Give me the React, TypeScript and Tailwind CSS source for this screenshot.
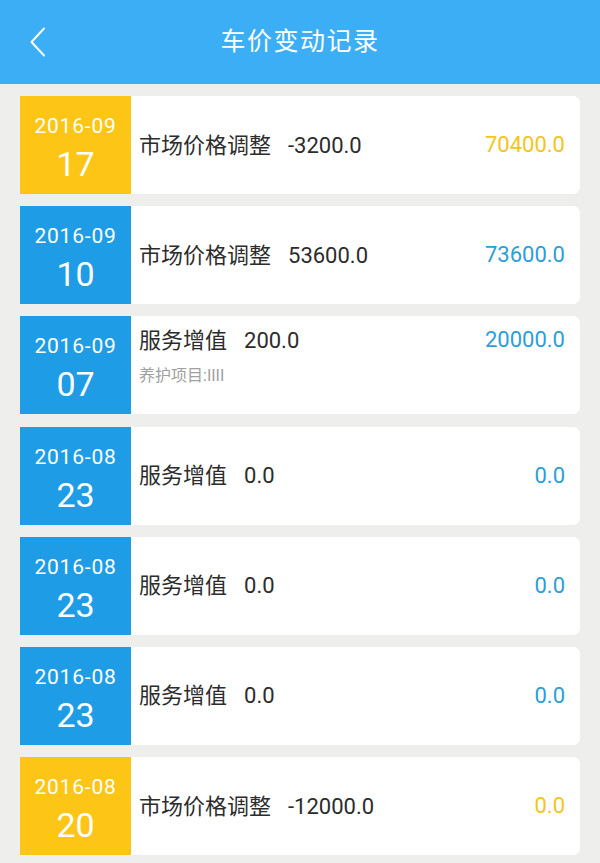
const records = [
  { month: '2016-09', day: '17', title: '市场价格调整', delta: '-3200.0', total: '70400.0', kind: 'market' },
  { month: '2016-09', day: '10', title: '市场价格调整', delta: '53600.0', total: '73600.0', kind: 'service' },
  { month: '2016-09', day: '07', title: '服务增值', delta: '200.0', total: '20000.0', kind: 'service', note: '养护项目:IIII' },
  { month: '2016-08', day: '23', title: '服务增值', delta: '0.0', total: '0.0', kind: 'service' },
  { month: '2016-08', day: '23', title: '服务增值', delta: '0.0', total: '0.0', kind: 'service' },
  { month: '2016-08', day: '23', title: '服务增值', delta: '0.0', total: '0.0', kind: 'service' },
  { month: '2016-08', day: '20', title: '市场价格调整', delta: '-12000.0', total: '0.0', kind: 'market' },
];

export default function App() {
  return (
    <div
      className="w-[600px] h-[863px] overflow-hidden bg-[#eeeeec]"
      style={{ fontFamily: 'Roboto, "Noto Sans CJK SC", sans-serif' }}
    >
      <header className="relative h-[84px] bg-[#3caef5] flex items-center justify-center">
        <button className="absolute left-[26px] top-[26px] w-[24px] h-[32px] flex items-center justify-center">
          <svg width="20" height="30" viewBox="0 0 20 30" fill="none">
            <path d="M16 1.5 L3.5 15 L16 28.5" stroke="white" strokeWidth="2" strokeLinecap="round" strokeLinejoin="round" />
          </svg>
        </button>
        <h1 className="text-white text-[25px] tracking-[1.5px]">车价变动记录</h1>
      </header>

      <div className="flex flex-col gap-[12.2px] px-[20px] pt-[12px]">
        {records.map((r, i) => {
          const market = r.kind === 'market';
          return (
            <div key={i} className="flex h-[98px] bg-white rounded-r-[7px] overflow-hidden">
              <div
                className={`w-[111px] shrink-0 flex flex-col items-center pt-[18px] text-white ${
                  market ? 'bg-[#fdc515]' : 'bg-[#1e9ce6]'
                }`}
              >
                <span className="text-[21px] leading-[24px] tracking-[0.8px]">{r.month}</span>
                <span className="text-[34px] leading-[40px] mt-[6px]">{r.day}</span>
              </div>
              <div className={`flex-1 flex pl-[8px] pr-[15px] ${r.note ? 'pt-[10px]' : 'items-center'}`}>
                <div className="flex-1 flex flex-col">
                  <div className="flex gap-[17px] text-[22px] leading-[28px] text-[#2c2c2c] mt-[1px]">
                    <span>{r.title}</span>
                    <span>{r.delta}</span>
                  </div>
                  {r.note && <div className="text-[16px] leading-[20px] text-[#a0a0a0] mt-[11px]">{r.note}</div>}
                </div>
                <div
                  className={`text-[22px] leading-[28px] ${market ? 'text-[#f3c51c]' : 'text-[#2a9fd8]'}`}
                >
                  {r.total}
                </div>
              </div>
            </div>
          );
        })}
      </div>
    </div>
  );
}
